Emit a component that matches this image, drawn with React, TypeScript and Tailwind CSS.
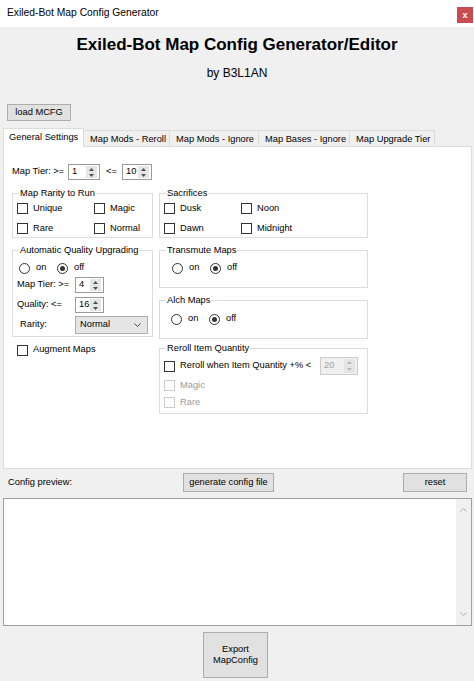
import type { ReactNode } from "react";

const FONT = "font-['Liberation_Sans',Arial,sans-serif]";

const SpinArrows = ({ disabled }: { disabled?: boolean }) => {
    const fill = disabled ? "#b8b8b8" : "#505050";
    return (
        <div className="my-[1px] mr-[2px] flex w-[11px] flex-col self-stretch bg-[#e6e6e6]">
            <div className="flex flex-1 items-center justify-center">
                <svg width="5" height="3" viewBox="0 0 5 3">
                    <path d="M2.5 0L5 3H0z" fill={fill} />
                </svg>
            </div>
            <div className="flex flex-1 items-center justify-center">
                <svg width="5" height="3" viewBox="0 0 5 3">
                    <path d="M0 0h5L2.5 3z" fill={fill} />
                </svg>
            </div>
        </div>
    );
};

const Spinner = ({
    value,
    className,
    disabled,
}: {
    value: string;
    className: string;
    disabled?: boolean;
}) => (
    <div
        className={`flex items-center border ${
            disabled ? "border-[#cccccc] bg-[#f0f0f0] text-[#a0a0a0]" : "border-[#9a9a9a] bg-white"
        } ${className}`}
    >
        <span className="flex-1 pl-[3px] leading-none">{value}</span>
        <SpinArrows disabled={disabled} />
    </div>
);

const Check = ({
    label,
    disabled,
    className = "",
}: {
    label: string;
    disabled?: boolean;
    className?: string;
}) => (
    <div className={`flex items-center gap-[5px] ${className}`}>
        <span
            className={`h-[11px] w-[11px] shrink-0 border ${
                disabled ? "border-[#cccccc] bg-white" : "border-[#333333] bg-white"
            }`}
        />
        <span className={disabled ? "text-[#9a9a9a]" : "text-black"}>{label}</span>
    </div>
);

const Radio = ({
    label,
    checked,
    className = "",
}: {
    label: string;
    checked?: boolean;
    className?: string;
}) => (
    <div className={`flex items-center gap-[6px] ${className}`}>
        <span className="flex h-[11px] w-[11px] shrink-0 items-center justify-center rounded-full border border-[#333333] bg-white">
            {checked && <span className="h-[5px] w-[5px] rounded-full bg-[#333333]" />}
        </span>
        <span>{label}</span>
    </div>
);

const Group = ({
    title,
    children,
    className = "",
}: {
    title: string;
    children: ReactNode;
    className?: string;
}) => (
    <fieldset className={`border border-[#dcdcdc] ${className}`}>
        <legend className="ml-[6px] px-[1px] leading-[12px]">{title}</legend>
        {children}
    </fieldset>
);

const OnOff = ({ className }: { className: string }) => (
    <div className={`flex h-[12px] items-center ${className}`}>
        <Radio label="on" className="w-[38px]" />
        <Radio label="off" checked />
    </div>
);

const Chevron = ({ up }: { up?: boolean }) => (
    <svg width="7" height="4" viewBox="0 0 7 4">
        <polyline
            points={up ? "0.5,3.5 3.5,0.5 6.5,3.5" : "0.5,0.5 3.5,3.5 6.5,0.5"}
            fill="none"
            stroke="#a8a8a8"
            strokeWidth="1"
        />
    </svg>
);

const Button = ({ children, className }: { children: ReactNode; className: string }) => (
    <div
        className={`flex items-center justify-center border border-[#adadad] bg-[#e1e1e1] text-center ${className}`}
    >
        {children}
    </div>
);

const tabs = [
    { label: "General Settings", w: "w-[81px]", active: true },
    { label: "Map Mods - Reroll", w: "w-[87px]" },
    { label: "Map Mods - Ignore", w: "w-[90px]" },
    { label: "Map Bases - Ignore", w: "w-[92px]" },
    { label: "Map Upgrade Tier", w: "w-[86px]" },
];

export default function App() {
    return (
        <div className={`h-[681px] w-[474px] overflow-hidden bg-[#f0f0f0] text-[9.3px] text-black ${FONT}`}>
            {/* window title bar */}
            <div className="flex h-[27px] items-start justify-between bg-white pl-[7px] pr-[1px]">
                <span className="mt-[7px] text-[10.3px] leading-[12px]">Exiled-Bot Map Config Generator</span>
                <div className="mt-[7px] flex h-[16px] w-[16px] items-center justify-center bg-[#c84b4f] text-[9px] font-bold leading-none text-white">
                    x
                </div>
            </div>

            <div className="mt-[8px] h-[20px] text-center text-[17px] font-bold leading-[20px]">
                Exiled-Bot Map Config Generator/Editor
            </div>
            <div className="mt-[11px] h-[14px] text-center text-[12px] leading-[14px]">by B3L1AN</div>

            <Button className="ml-[7px] mt-[24px] h-[17px] w-[64px]">load MCFG</Button>

            {/* tab strip */}
            <div className="ml-[3px] mt-[7px] flex h-[18px] items-end">
                {tabs.map((t) =>
                    t.active ? (
                        <div
                            key={t.label}
                            className={`relative z-10 -mb-[1px] flex h-[19px] items-start border border-b-0 border-[#dcdcdc] bg-white pl-[5px] pt-[3px] leading-[11px] ${t.w}`}
                        >
                            {t.label}
                        </div>
                    ) : (
                        <div
                            key={t.label}
                            className={`-ml-[1px] flex h-[16px] items-start border border-b-0 border-[#dcdcdc] bg-[#f0f0f0] pl-[6px] pt-[3px] leading-[11px] ${t.w}`}
                        >
                            {t.label}
                        </div>
                    )
                )}
            </div>

            {/* tab page */}
            <div className="ml-[3px] h-[323px] w-[469px] border border-[#dcdcdc] bg-white pl-[8px] pt-[17px]">
                <div className="flex h-[16px] items-center">
                    <span className="w-[56px]">Map Tier: &gt;=</span>
                    <Spinner value="1" className="h-[16px] w-[32px]" />
                    <span className="w-[22px] pl-[6px]">&lt;=</span>
                    <Spinner value="10" className="h-[16px] w-[30px]" />
                </div>

                <div className="mt-[7px] flex gap-[6px]">
                    {/* left column */}
                    <div className="flex w-[141px] flex-col">
                        <Group title="Map Rarity to Run">
                            <div className="flex flex-col gap-[7px] pb-[2px] pl-[4px] pt-[3px]">
                                <div className="flex h-[13px]">
                                    <Check label="Unique" className="w-[77px]" />
                                    <Check label="Magic" />
                                </div>
                                <div className="flex h-[13px]">
                                    <Check label="Rare" className="w-[77px]" />
                                    <Check label="Normal" />
                                </div>
                            </div>
                        </Group>

                        <Group title="Automatic Quality Upgrading" className="mt-[6px]">
                            <div className="flex flex-col pb-[2px] pt-[6px]">
                                <OnOff className="pl-[6px]" />
                                <div className="mt-[3px] flex h-[16px] items-center pl-[4px]">
                                    <span className="w-[58px]">Map Tier: &gt;=</span>
                                    <Spinner value="4" className="h-[16px] w-[29px]" />
                                </div>
                                <div className="mt-[4px] flex h-[16px] items-center pl-[4px]">
                                    <span className="w-[58px]">Quality: &lt;=</span>
                                    <Spinner value="16" className="h-[16px] w-[29px]" />
                                </div>
                                <div className="mt-[3px] flex h-[18px] items-center pl-[7px]">
                                    <span className="w-[55px]">Rarity:</span>
                                    <div className="flex h-[18px] w-[73px] items-center justify-between border border-[#adadad] bg-[#e5e5e5] pl-[4px] pr-[6px]">
                                        <span>Normal</span>
                                        <svg width="7" height="4" viewBox="0 0 7 4">
                                            <polyline
                                                points="0.5,0.5 3.5,3.5 6.5,0.5"
                                                fill="none"
                                                stroke="#444444"
                                                strokeWidth="1"
                                            />
                                        </svg>
                                    </div>
                                </div>
                            </div>
                        </Group>

                        <Check label="Augment Maps" className="ml-[5px] mt-[7px] h-[12px]" />
                    </div>

                    {/* right column */}
                    <div className="flex w-[209px] flex-col">
                        <Group title="Sacrifices">
                            <div className="flex flex-col gap-[7px] pb-[2px] pl-[4px] pt-[3px]">
                                <div className="flex h-[13px]">
                                    <Check label="Dusk" className="w-[77px]" />
                                    <Check label="Noon" />
                                </div>
                                <div className="flex h-[13px]">
                                    <Check label="Dawn" className="w-[77px]" />
                                    <Check label="Midnight" />
                                </div>
                            </div>
                        </Group>

                        <Group title="Transmute Maps" className="mt-[6px]">
                            <OnOff className="mb-[13px] mt-[6px] pl-[12px]" />
                        </Group>

                        <Group title="Alch Maps" className="mt-[6px]">
                            <OnOff className="mb-[13px] mt-[7px] pl-[11px]" />
                        </Group>

                        <Group title="Reroll Item Quantity" className="mt-[3px]">
                            <div className="flex flex-col pb-[4px] pl-[4px] pt-[3px]">
                                <div className="flex h-[18px] items-center">
                                    <Check label="Reroll when Item Quantity +% <" className="w-[156px]" />
                                    <Spinner value="20" disabled className="h-[18px] w-[38px]" />
                                </div>
                                <Check label="Magic" disabled className="mt-[4px] h-[13px]" />
                                <Check label="Rare" disabled className="mt-[4px] h-[13px]" />
                            </div>
                        </Group>
                    </div>
                </div>
            </div>

            {/* preview controls */}
            <div className="mt-[4px] flex h-[19px] items-center pl-[8px] pr-[7px]">
                <span className="w-[175px]">Config preview:</span>
                <Button className="h-[19px] w-[91px]">generate config file</Button>
                <Button className="ml-auto h-[19px] w-[64px]">reset</Button>
            </div>

            <div className="ml-[3px] mt-[6px] flex h-[128px] w-[469px] justify-end border border-[#a0a0a0] bg-white">
                <div className="flex w-[15px] flex-col items-center justify-between bg-[#f0f0f0] py-[9px]">
                    <Chevron up />
                    <Chevron />
                </div>
            </div>

            <Button className="ml-[203px] mt-[6px] h-[46px] w-[65px] flex-col leading-[11px]">
                <span>Export</span>
                <span>MapConfig</span>
            </Button>
        </div>
    );
}
